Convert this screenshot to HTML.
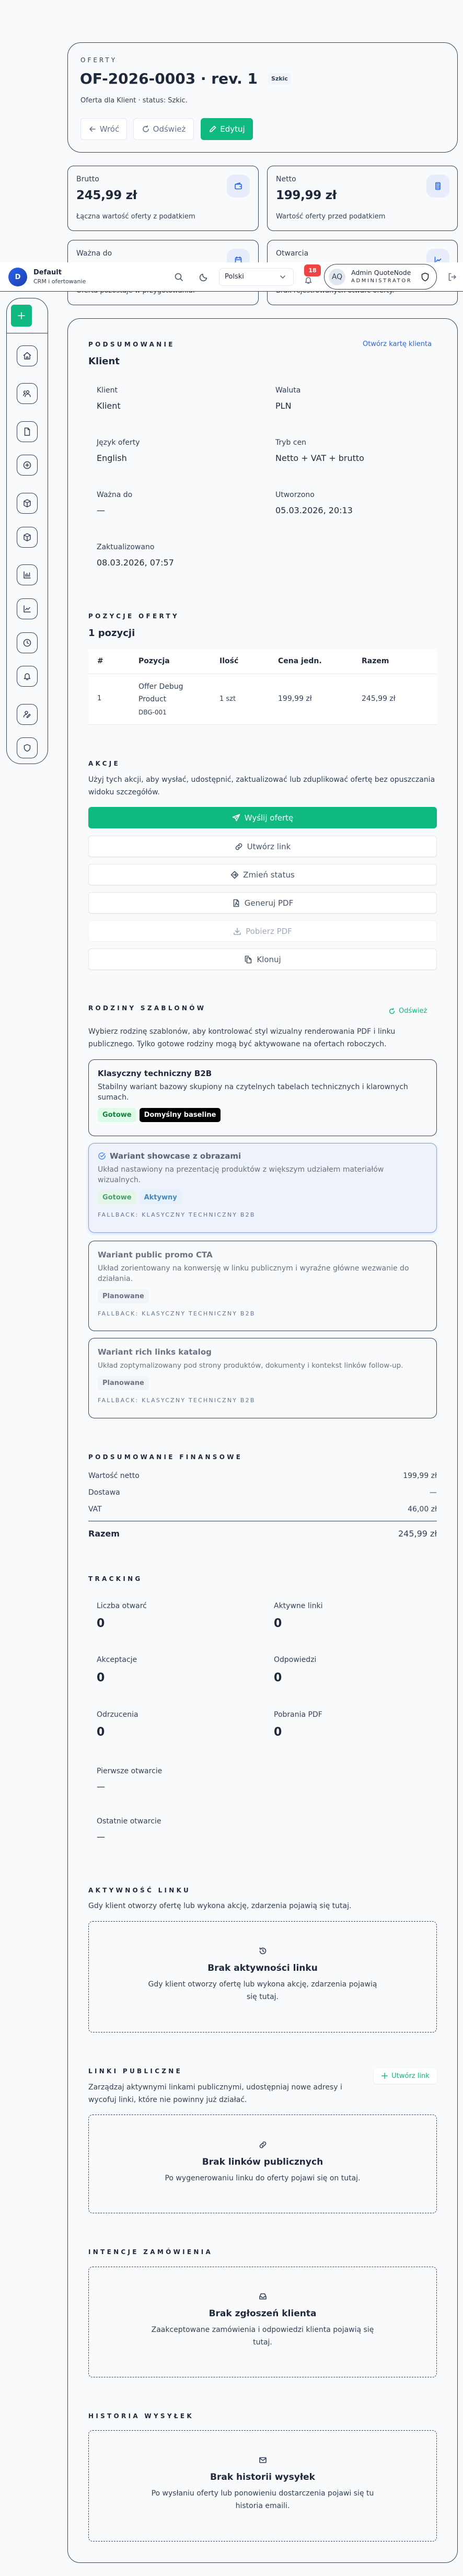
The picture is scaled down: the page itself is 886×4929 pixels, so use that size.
<!DOCTYPE html>
<html><head><meta charset="utf-8">
<style>
*{box-sizing:border-box;margin:0;padding:0}
body{width:886px;height:4929px;background:#f8fafc;font-family:"DejaVu Sans","Liberation Sans",sans-serif;color:#1e293b;position:relative;overflow:hidden}
.a{position:absolute}
.card{position:absolute;border:1px solid #334155;background:#f8fafc}
.lbl{position:absolute;font-size:12px;font-weight:bold;letter-spacing:4.3px;color:#1e293b;white-space:nowrap}
.t{position:absolute;white-space:nowrap}
.btn{position:absolute;left:169px;width:667px;height:41px;background:#fff;border:1px solid #e2e8f0;border-radius:6px;box-shadow:0 1px 2px rgba(0,0,0,.06);display:flex;align-items:center;justify-content:center;gap:8px;font-size:15px;color:#475569}
.btn svg{width:16px;height:16px;fill:none;stroke:currentColor;stroke-width:1.6;stroke-linecap:round;stroke-linejoin:round}
.sb{position:absolute;left:32px;width:40px;height:40px;border:1px solid #334155;border-radius:12px;display:flex;align-items:center;justify-content:center}
.sb svg{width:18px;height:18px;fill:none;stroke:#334155;stroke-width:1.5;stroke-linecap:round;stroke-linejoin:round}
.ic{fill:none;stroke:currentColor;stroke-width:1.6;stroke-linecap:round;stroke-linejoin:round}
.tpl{position:absolute;left:169px;width:667px;border:1px solid #334155;border-radius:12px;padding:0 17px}
.badge{display:inline-block;font-size:13px;font-weight:bold;padding:0 9px;height:27px;line-height:27px;border-radius:5px;margin-right:6px}
.fb{font-size:11px;letter-spacing:2.2px;color:#64748b}
.empty{position:absolute;left:169px;width:667px;border:1px dashed #334155;border-radius:8px;text-align:center}
.empty h4{font-size:17px;font-weight:bold;color:#1e293b}
.empty p{font-size:14px;line-height:24px;color:#334155}
.k{font-size:14px;color:#334155}
.v{font-size:16px;color:#1e293b}
.n{font-size:22px;font-weight:bold;color:#1e293b}
</style></head><body>

<!-- top card -->
<div class="card" style="left:129px;top:81px;width:747px;height:211px;border-radius:26px"></div>
<div class="t" style="left:154px;top:108px;font-size:12px;letter-spacing:4px;color:#334155">OFERTY</div>
<div class="t" style="left:153px;top:134px;font-size:28px;font-weight:bold;color:#1e293b">OF-2026-0003 · rev. 1</div>
<div class="t" style="left:513px;top:140px;height:22px;line-height:22px;padding:0 6px;background:#f1f5f9;border-radius:5px;font-size:11px;font-weight:bold;color:#334155">Szkic</div>
<div class="t" style="left:154px;top:185px;font-size:13px;color:#334155">Oferta dla Klient · status: Szkic.</div>
<div class="a" style="left:154px;top:226px;width:89px;height:42px;border:1px solid #e2e8f0;border-radius:6px;background:#fff;display:flex;align-items:center;justify-content:center;gap:6px;font-size:15px;color:#64748b"><svg class="ic" width="16" height="16" viewBox="0 0 16 16"><path d="M13 8H3M7 4L3 8l4 4"/></svg>Wróć</div>
<div class="a" style="left:255px;top:226px;width:116px;height:42px;border:1px solid #e2e8f0;border-radius:6px;background:#fff;display:flex;align-items:center;justify-content:center;gap:6px;font-size:15px;color:#64748b"><svg class="ic" width="16" height="16" viewBox="0 0 16 16"><path d="M13 8a5 5 0 1 1-2-4M11 1.5V4h-2.5"/></svg>Odśwież</div>
<div class="a" style="left:384px;top:226px;width:100px;height:42px;border-radius:6px;background:#10b981;display:flex;align-items:center;justify-content:center;gap:6px;font-size:15px;color:#fff"><svg class="ic" width="16" height="16" viewBox="0 0 16 16"><path d="M11 2.5l2.5 2.5L6 12.5 3 13l.5-3z"/></svg>Edytuj</div>

<!-- stat cards -->
<div class="card" style="left:129px;top:317px;width:366px;height:125px;border-radius:12px"></div>
<div class="t" style="left:146px;top:335px;font-size:14px;color:#334155">Brutto</div>
<div class="t" style="left:146px;top:361px;font-size:23px;font-weight:bold;color:#1e293b;letter-spacing:-0.3px">245,99 zł</div>
<div class="t" style="left:146px;top:407px;font-size:13px;color:#334155">Łączna wartość oferty z podatkiem</div>
<div class="a" style="left:434px;top:334px;width:44px;height:44px;border-radius:14px;background:#e8edfb;display:flex;align-items:center;justify-content:center;color:#2563eb"><svg class="ic" width="16" height="16" viewBox="0 0 16 16"><rect x="2" y="4.5" width="12" height="9" rx="1.5"/><path d="M3 4.5L11 2v2.5M11 9h1.5"/></svg></div>

<div class="card" style="left:511px;top:317px;width:365px;height:125px;border-radius:12px"></div>
<div class="t" style="left:528px;top:335px;font-size:14px;color:#334155">Netto</div>
<div class="t" style="left:528px;top:361px;font-size:23px;font-weight:bold;color:#1e293b;letter-spacing:-0.3px">199,99 zł</div>
<div class="t" style="left:528px;top:407px;font-size:13px;color:#334155">Wartość oferty przed podatkiem</div>
<div class="a" style="left:816px;top:334px;width:44px;height:44px;border-radius:14px;background:#e8edfb;display:flex;align-items:center;justify-content:center;color:#2563eb"><svg class="ic" width="16" height="16" viewBox="0 0 16 16"><rect x="4" y="1.5" width="8" height="13" rx="1"/><path d="M6 4h4M6 7h.5M8 7h.5M10 7h.5M6 9.5h.5M8 9.5h.5M10 9.5h.5M6 12h.5M8 12h.5M10 12h.5"/></svg></div>

<div class="card" style="left:129px;top:459px;width:366px;height:125px;border-radius:12px"></div>
<div class="t" style="left:146px;top:477px;font-size:14px;color:#334155">Ważna do</div>
<div class="t" style="left:146px;top:549px;font-size:13px;color:#334155">Oferta pozostaje w przygotowaniu.</div>
<div class="a" style="left:434px;top:476px;width:44px;height:44px;border-radius:14px;background:#e8edfb;display:flex;align-items:center;justify-content:center;color:#2563eb"><svg class="ic" width="16" height="16" viewBox="0 0 16 16"><rect x="2.5" y="3" width="11" height="11" rx="1.5"/><path d="M5 1.5v3M11 1.5v3M2.5 7h11"/></svg></div>
<div class="card" style="left:511px;top:459px;width:365px;height:125px;border-radius:12px"></div>
<div class="t" style="left:528px;top:477px;font-size:14px;color:#334155">Otwarcia</div>
<div class="t" style="left:528px;top:549px;font-size:13px;color:#334155">Brak rejestrowanych otwarć oferty.</div>
<div class="a" style="left:816px;top:476px;width:44px;height:44px;border-radius:14px;background:#e8edfb;display:flex;align-items:center;justify-content:center;color:#2563eb"><svg class="ic" width="16" height="16" viewBox="0 0 16 16"><path d="M2.5 2v11.5H14M5 10l3-3 2 2 3.5-3.5"/></svg></div>

<!-- header bar -->
<div class="a" style="left:0;top:502px;width:886px;height:56px;background:#fff;border-bottom:1px solid #334155;z-index:5">
  <div class="a" style="left:16px;top:10px;width:36px;height:36px;border-radius:50%;background:linear-gradient(135deg,#2563eb,#1e40af);color:#fff;font-weight:bold;font-size:13px;display:flex;align-items:center;justify-content:center">D</div>
  <div class="t" style="left:64px;top:12px;font-size:13px;font-weight:bold;color:#1e293b">Default</div>
  <div class="t" style="left:64px;top:30px;font-size:11px;color:#334155">CRM i ofertowanie</div>
  <svg class="a ic" style="left:333px;top:19px;color:#475569" width="18" height="18" viewBox="0 0 18 18"><circle cx="8" cy="8" r="5.5"/><path d="M12 12l4 4"/></svg>
  <svg class="a ic" style="left:381px;top:19px;color:#475569" width="18" height="18" viewBox="0 0 18 18"><path d="M14.5 11A6.5 6.5 0 0 1 7 3.5 6.5 6.5 0 1 0 14.5 11z"/></svg>
  <div class="a" style="left:419px;top:11px;width:143px;height:34px;border:1px solid #e2e8f0;border-radius:7px;font-size:13px;line-height:32px;padding-left:10px;color:#1e293b">Polski</div>
  <svg class="a ic" style="left:535px;top:22px;color:#64748b" width="12" height="12" viewBox="0 0 12 12"><path d="M2 4l4 4 4-4"/></svg>
  <svg class="a ic" style="left:582px;top:26px;color:#64748b" width="16" height="16" viewBox="0 0 16 16"><path d="M4 11V7a4 4 0 0 1 8 0v4l1.5 1.5h-11zM6.5 14h3"/></svg>
  <div class="a" style="left:582px;top:4px;width:32px;height:23px;border-radius:6px;background:#ef4444;color:#fff;font-size:11px;font-weight:bold;text-align:center;line-height:23px">18</div>
  <div class="a" style="left:620px;top:3px;width:216px;height:49px;border:1px solid #334155;border-radius:25px">
    <div class="a" style="left:8px;top:8px;width:32px;height:32px;border-radius:50%;background:#e2e8f0;font-size:14px;color:#334155;text-align:center;line-height:32px">AQ</div>
    <div class="t" style="left:51px;top:8px;font-size:12.5px;color:#1e293b">Admin QuoteNode</div>
    <div class="t" style="left:51px;top:26px;font-size:10px;letter-spacing:2.6px;color:#1e293b">ADMINISTRATOR</div>
    <svg class="a ic" style="left:184px;top:15px;color:#1e293b" width="17" height="18" viewBox="0 0 17 18"><path d="M8.5 1.5L2.5 4v5c0 3.5 3 6 6 7.5 3-1.5 6-4 6-7.5V4z"/></svg>
  </div>
  <svg class="a ic" style="left:856px;top:19px;color:#64748b" width="18" height="18" viewBox="0 0 18 18"><path d="M7 2.5H3.5v13H7M8 9h8M13 6l3 3-3 3"/></svg>
</div>

<!-- sidebar -->
<div class="a" style="left:12px;top:570px;width:80px;height:892px;border:1px solid #334155;border-radius:28px"></div>
<div class="a" style="left:21px;top:583px;width:40px;height:42px;border-radius:6px;background:#10b981;display:flex;align-items:center;justify-content:center"><svg class="ic" width="16" height="16" viewBox="0 0 16 16" style="color:#fff"><path d="M8 2v12M2 8h12"/></svg></div>
<div class="a" style="left:13px;top:637px;width:78px;height:1px;background:#334155"></div>
<div class="sb" style="top:661px"><svg viewBox="0 0 18 18"><path d="M2.5 8L9 2.5 15.5 8M4 7v8h10V7M7.5 15v-4h3v4"/></svg></div>
<div class="sb" style="top:733px"><svg viewBox="0 0 18 18"><circle cx="10" cy="6" r="2.5"/><path d="M5 15c0-3 2.5-5 5-5s5 2 5 5M5.5 4.5a2 2 0 1 0 0 3.5M2 13c0-2 1.5-3.5 3-3.5"/></svg></div>
<div class="sb" style="top:806px"><svg viewBox="0 0 18 18"><path d="M4.5 2h6l3 3v11h-9zM10.5 2v3h3"/></svg></div>
<div class="sb" style="top:870px"><svg viewBox="0 0 18 18"><circle cx="9" cy="9" r="6.5"/><path d="M9 6v6M6 9h6"/></svg></div>
<div class="sb" style="top:943px"><svg viewBox="0 0 18 18"><path d="M9 2l6 3v8l-6 3-6-3V5zM3 5l6 3 6-3M9 8v8"/></svg></div>
<div class="sb" style="top:1008px"><svg viewBox="0 0 18 18"><path d="M9 2l6 3v8l-6 3-6-3V5zM3 5l6 3 6-3M9 8v8"/></svg></div>
<div class="sb" style="top:1080px"><svg viewBox="0 0 18 18"><path d="M3 3v12h12M6 12V8M8.5 12V6M11 12V9M13.5 12V5"/></svg></div>
<div class="sb" style="top:1145px"><svg viewBox="0 0 18 18"><path d="M3 3v12h12M5.5 11l3-3 2 2 3.5-3.5"/></svg></div>
<div class="sb" style="top:1210px"><svg viewBox="0 0 18 18"><circle cx="9" cy="9" r="6.5"/><path d="M9 5.5V9l2.5 1.5"/></svg></div>
<div class="sb" style="top:1274px"><svg viewBox="0 0 18 18"><path d="M5 12V8a4 4 0 0 1 8 0v4l1.5 1.5h-11zM7.5 15.5h3"/></svg></div>
<div class="sb" style="top:1347px"><svg viewBox="0 0 18 18"><circle cx="7.5" cy="5.5" r="2.5"/><path d="M2.5 14c0-3 2.5-5 5-5M10 15l5-5-1.5-1.5-5 5V15z"/></svg></div>
<div class="sb" style="top:1411px"><svg viewBox="0 0 18 18"><path d="M9 2.5L3.5 5v4c0 3 2.5 5.5 5.5 6.5 3-1 5.5-3.5 5.5-6.5V5z"/></svg></div>

<!-- main card -->
<div class="card" style="left:129px;top:609px;width:747px;height:4295px;border-radius:24px"></div>

<div class="lbl" style="left:169px;top:652px">PODSUMOWANIE</div>
<div class="t" style="left:694px;top:651px;font-size:13px;color:#2563eb">Otwórz kartę klienta</div>
<div class="t" style="left:169px;top:681px;font-size:18px;font-weight:bold">Klient</div>

<div class="t k" style="left:185px;top:739px">Klient</div><div class="t v" style="left:185px;top:767px">Klient</div>
<div class="t k" style="left:527px;top:739px">Waluta</div><div class="t v" style="left:527px;top:767px">PLN</div>
<div class="t k" style="left:185px;top:839px">Język oferty</div><div class="t v" style="left:185px;top:867px">English</div>
<div class="t k" style="left:527px;top:839px">Tryb cen</div><div class="t v" style="left:527px;top:867px">Netto + VAT + brutto</div>
<div class="t k" style="left:185px;top:939px">Ważna do</div><div class="t v" style="left:185px;top:967px">—</div>
<div class="t k" style="left:527px;top:939px">Utworzono</div><div class="t v" style="left:527px;top:967px">05.03.2026, 20:13</div>
<div class="t k" style="left:185px;top:1039px">Zaktualizowano</div><div class="t v" style="left:185px;top:1067px">08.03.2026, 07:57</div>

<div class="lbl" style="left:169px;top:1172px">POZYCJE OFERTY</div>
<div class="t" style="left:169px;top:1201px;font-size:18px;font-weight:bold">1 pozycji</div>

<div class="a" style="left:169px;top:1242px;width:667px;height:145px;background:#fff;border-bottom:1px solid #e2e8f0">
  <div class="a" style="left:0;top:47px;width:667px;height:1px;background:#e2e8f0"></div>
  <div class="t" style="left:17px;top:15px;font-size:14px;font-weight:bold">#</div>
  <div class="t" style="left:96px;top:15px;font-size:14px;font-weight:bold">Pozycja</div>
  <div class="t" style="left:251px;top:15px;font-size:14px;font-weight:bold">Ilość</div>
  <div class="t" style="left:363px;top:15px;font-size:14px;font-weight:bold">Cena jedn.</div>
  <div class="t" style="left:523px;top:15px;font-size:14px;font-weight:bold">Razem</div>
  <div class="t" style="left:17px;top:87px;font-size:13px;color:#334155">1</div>
  <div class="a" style="left:96px;top:60px;font-size:14px;line-height:24px;color:#334155">Offer Debug<br>Product</div>
  <div class="t" style="left:96px;top:114px;font-size:12px;color:#334155">DBG-001</div>
  <div class="t" style="left:251px;top:88px;font-size:13px;color:#334155">1 szt</div>
  <div class="t" style="left:363px;top:87px;font-size:14px;color:#334155">199,99 zł</div>
  <div class="t" style="left:523px;top:87px;font-size:14px;color:#334155">245,99 zł</div>
</div>

<!-- actions -->
<div class="lbl" style="left:169px;top:1454px">AKCJE</div>
<div class="a" style="left:169px;top:1480px;width:670px;font-size:14px;line-height:24px;color:#334155">Użyj tych akcji, aby wysłać, udostępnić, zaktualizować lub zduplikować ofertę bez opuszczania widoku szczegółów.</div>
<div class="btn" style="top:1544px;background:#10b981;border-color:#10b981;color:#fff"><svg viewBox="0 0 16 16"><path d="M14.5 1.5L1.5 6.5l5 2 2 5zM6.5 8.5l8-7"/></svg>Wyślij ofertę</div>
<div class="btn" style="top:1599px"><svg viewBox="0 0 16 16"><path d="M6.5 9.5a3 3 0 0 0 4.2 0l2.3-2.3a3 3 0 0 0-4.2-4.2l-1 1M9.5 6.5a3 3 0 0 0-4.2 0L3 8.8A3 3 0 0 0 7.2 13l1-1"/></svg>Utwórz link</div>
<div class="btn" style="top:1653px"><svg viewBox="0 0 16 16"><path d="M8 1.5L14.5 8 8 14.5 1.5 8zM5 8h6M9 6l2 2-2 2"/></svg>Zmień status</div>
<div class="btn" style="top:1707px"><svg viewBox="0 0 16 16"><path d="M3.5 1.5h6l3 3v10h-9zM9.5 1.5v3h3M6 12c1-2 2-4 2-6 0 2 1 4 3 5"/></svg>Generuj PDF</div>
<div class="btn" style="top:1761px;color:#a0aab8;box-shadow:none;border-color:#eef1f5"><svg viewBox="0 0 16 16"><path d="M8 2v8M4.5 7L8 10.5 11.5 7M2 11v3h12v-3"/></svg>Pobierz PDF</div>
<div class="btn" style="top:1815px"><svg viewBox="0 0 16 16"><path d="M5.5 4.5h5l3 3v7h-8zM10.5 4.5v3h3M3.5 11.5h-1v-10h6v1"/></svg>Klonuj</div>

<!-- templates -->
<div class="lbl" style="left:169px;top:1922px">RODZINY SZABLONÓW</div>
<div class="t" style="left:743px;top:1927px;font-size:13px;color:#10b981;display:flex;align-items:center;gap:6px"><svg class="ic" width="14" height="14" viewBox="0 0 16 16"><path d="M13 8a5 5 0 1 1-2-4M11 1.5V4h-2.5"/></svg>Odśwież</div>
<div class="a" style="left:169px;top:1962px;width:667px;font-size:14px;line-height:24px;color:#334155">Wybierz rodzinę szablonów, aby kontrolować styl wizualny renderowania PDF i linku publicznego. Tylko gotowe rodziny mogą być aktywowane na ofertach roboczych.</div>

<div class="tpl" style="top:2027px;height:147px">
  <div style="margin-top:17px;font-size:15px;font-weight:bold;color:#1e293b">Klasyczny techniczny B2B</div>
  <div style="margin-top:7px;font-size:14px;line-height:20px;color:#334155">Stabilny wariant bazowy skupiony na czytelnych tabelach technicznych i klarownych sumach.</div>
  <div style="margin-top:10px"><span class="badge" style="background:#dcfce7;color:#15803d">Gotowe</span><span class="badge" style="background:#000;color:#fff">Domyślny baseline</span></div>
</div>

<div class="tpl" style="top:2187px;height:172px;background:#eef2fb;border-color:#7f9fe0;box-shadow:0 2px 6px rgba(59,130,246,.2)">
  <div style="margin-top:15px;font-size:15px;font-weight:bold;color:#5b6472;display:flex;align-items:center;gap:7px"><svg class="ic" width="16" height="16" viewBox="0 0 16 16" style="color:#5b8def"><path d="M14 7.5A6 6 0 1 1 10.5 2.5M5.5 7.5l2 2 6-6"/></svg>Wariant showcase z obrazami</div>
  <div style="margin-top:7px;font-size:14px;line-height:20px;color:#6b7280">Układ nastawiony na prezentację produktów z większym udziałem materiałów wizualnych.</div>
  <div style="margin-top:10px"><span class="badge" style="background:#e4f6ea;color:#4a9e6a">Gotowe</span><span class="badge" style="background:#e6f1fb;color:#4688b8">Aktywny</span></div>
  <div class="fb" style="margin-top:13px">FALLBACK: KLASYCZNY TECHNICZNY B2B</div>
</div>

<div class="tpl" style="top:2374px;height:173px">
  <div style="margin-top:17px;font-size:15px;font-weight:bold;color:#6b7280">Wariant public promo CTA</div>
  <div style="margin-top:7px;font-size:14px;line-height:20px;color:#6b7280">Układ zorientowany na konwersję w linku publicznym i wyraźne główne wezwanie do działania.</div>
  <div style="margin-top:10px"><span class="badge" style="background:#f1f5f9;color:#6b7280">Planowane</span></div>
  <div class="fb" style="margin-top:13px">FALLBACK: KLASYCZNY TECHNICZNY B2B</div>
</div>

<div class="tpl" style="top:2560px;height:154px">
  <div style="margin-top:17px;font-size:15px;font-weight:bold;color:#6b7280">Wariant rich links katalog</div>
  <div style="margin-top:7px;font-size:13.5px;line-height:20px;color:#6b7280;white-space:nowrap">Układ zoptymalizowany pod strony produktów, dokumenty i kontekst linków follow-up.</div>
  <div style="margin-top:10px"><span class="badge" style="background:#f1f5f9;color:#6b7280">Planowane</span></div>
  <div class="fb" style="margin-top:13px">FALLBACK: KLASYCZNY TECHNICZNY B2B</div>
</div>

<!-- finance -->
<div class="lbl" style="left:169px;top:2781px">PODSUMOWANIE FINANSOWE</div>
<div class="t" style="left:169px;top:2816px;font-size:14px;color:#334155">Wartość netto</div><div class="t" style="right:50px;top:2816px;font-size:14px;color:#334155">199,99 zł</div>
<div class="t" style="left:169px;top:2848px;font-size:14px;color:#334155">Dostawa</div><div class="t" style="right:50px;top:2848px;font-size:14px;color:#334155">—</div>
<div class="t" style="left:169px;top:2880px;font-size:14px;color:#334155">VAT</div><div class="t" style="right:50px;top:2880px;font-size:14px;color:#334155">46,00 zł</div>
<div class="a" style="left:169px;top:2910px;width:667px;height:1px;background:#334155"></div>
<div class="t" style="left:169px;top:2925px;font-size:16px;font-weight:bold">Razem</div><div class="t" style="right:50px;top:2925px;font-size:16px;color:#334155">245,99 zł</div>

<!-- tracking -->
<div class="lbl" style="left:169px;top:3014px">TRACKING</div>
<div class="t k" style="left:185px;top:3065px">Liczba otwarć</div><div class="t n" style="left:185px;top:3094px">0</div>
<div class="t k" style="left:524px;top:3065px">Aktywne linki</div><div class="t n" style="left:524px;top:3094px">0</div>
<div class="t k" style="left:185px;top:3168px">Akceptacje</div><div class="t n" style="left:185px;top:3198px">0</div>
<div class="t k" style="left:524px;top:3168px">Odpowiedzi</div><div class="t n" style="left:524px;top:3198px">0</div>
<div class="t k" style="left:185px;top:3273px">Odrzucenia</div><div class="t n" style="left:185px;top:3302px">0</div>
<div class="t k" style="left:524px;top:3273px">Pobrania PDF</div><div class="t n" style="left:524px;top:3302px">0</div>
<div class="t k" style="left:185px;top:3381px">Pierwsze otwarcie</div><div class="t v" style="left:185px;top:3409px">—</div>
<div class="t k" style="left:185px;top:3477px">Ostatnie otwarcie</div><div class="t v" style="left:185px;top:3505px">—</div>

<!-- link activity -->
<div class="lbl" style="left:169px;top:3610px">AKTYWNOŚĆ LINKU</div>
<div class="t" style="left:169px;top:3639px;font-size:14px;color:#334155">Gdy klient otworzy ofertę lub wykona akcję, zdarzenia pojawią się tutaj.</div>
<div class="empty" style="top:3676px;height:213px">
  <svg class="ic" style="margin-top:48px;color:#334155" width="16" height="16" viewBox="0 0 16 16"><path d="M2.5 8a5.5 5.5 0 1 0 1.6-3.9M2.5 2v2.5H5M8 5v3l2 1.5"/></svg>
  <h4 style="margin-top:11px">Brak aktywności linku</h4>
  <p style="margin:9px auto 0;width:460px">Gdy klient otworzy ofertę lub wykona akcję, zdarzenia pojawią się tutaj.</p>
</div>

<!-- public links -->
<div class="lbl" style="left:169px;top:3956px">LINKI PUBLICZNE</div>
<div class="a" style="left:715px;top:3957px;width:121px;height:30px;background:#fff;border-radius:6px;box-shadow:0 1px 3px rgba(0,0,0,.08);display:flex;align-items:center;justify-content:center;gap:6px;font-size:13px;color:#10b981"><svg class="ic" width="14" height="14" viewBox="0 0 16 16"><path d="M8 2v12M2 8h12"/></svg>Utwórz link</div>
<div class="a" style="left:169px;top:3982px;width:500px;font-size:14px;line-height:24px;color:#334155">Zarządzaj aktywnymi linkami publicznymi, udostępniaj nowe adresy i wycofuj linki, które nie powinny już działać.</div>
<div class="empty" style="top:4046px;height:189px">
  <svg class="ic" style="margin-top:49px;color:#334155" width="16" height="16" viewBox="0 0 16 16"><path d="M6.5 9.5a3 3 0 0 0 4.2 0l2.3-2.3a3 3 0 0 0-4.2-4.2l-1 1M9.5 6.5a3 3 0 0 0-4.2 0L3 8.8A3 3 0 0 0 7.2 13l1-1"/></svg>
  <h4 style="margin-top:11px">Brak linków publicznych</h4>
  <p style="margin-top:9px">Po wygenerowaniu linku do oferty pojawi się on tutaj.</p>
</div>

<!-- order intents -->
<div class="lbl" style="left:169px;top:4302px">INTENCJE ZAMÓWIENIA</div>
<div class="empty" style="top:4337px;height:212px">
  <svg class="ic" style="margin-top:48px;color:#334155" width="16" height="16" viewBox="0 0 16 16"><path d="M2 8.5V13h12V8.5L11.5 3h-7zM2 8.5h3.5l1 2h3l1-2H14"/></svg>
  <h4 style="margin-top:11px">Brak zgłoszeń klienta</h4>
  <p style="margin:9px auto 0;width:440px">Zaakceptowane zamówienia i odpowiedzi klienta pojawią się tutaj.</p>
</div>

<!-- send history -->
<div class="lbl" style="left:169px;top:4616px">HISTORIA WYSYŁEK</div>
<div class="empty" style="top:4650px;height:213px">
  <svg class="ic" style="margin-top:48px;color:#334155" width="16" height="16" viewBox="0 0 16 16"><rect x="2" y="3.5" width="12" height="9.5" rx="1"/><path d="M2 4.5l6 4.5 6-4.5"/></svg>
  <h4 style="margin-top:11px">Brak historii wysyłek</h4>
  <p style="margin:9px auto 0;width:440px">Po wysłaniu oferty lub ponowieniu dostarczenia pojawi się tu historia emaili.</p>
</div>

</body></html>
